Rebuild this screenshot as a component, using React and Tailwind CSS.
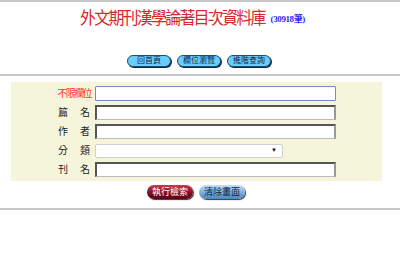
import React from "react";

const cjk = "font-['Liberation_Serif','Noto_Sans_CJK_TC',serif]";

function NavButton({ children }) {
  return (
    <span className="flex h-[12px] w-[44px] items-center justify-center rounded-full border border-[#1d4d78] bg-[#6ccdf7] text-[8px] leading-none text-[#0b2850] shadow-[1px_1px_0_#0b2a48]">
      {children}
    </span>
  );
}

function Label({ text, red }) {
  if (red) {
    return (
      <span className="w-[34px] text-right text-[10px] leading-none tracking-[-1.6px] text-[#ff3030]">
        {text}
      </span>
    );
  }
  return (
    <span className="flex w-[34px] justify-between px-[1px] text-[10px] leading-none text-[#222]">
      <span>{text[0]}</span>
      <span>{text[1]}</span>
    </span>
  );
}

function Row({ label, red, children }) {
  return (
    <div className="flex h-[15px] items-center gap-[4px] pl-[46px]">
      <Label text={label} red={red} />
      {children}
    </div>
  );
}

function TextBox({ focus }) {
  return (
    <div
      className={
        focus
          ? "h-[15px] w-[241px] rounded-[1px] border border-[#6b8fc9] bg-white"
          : "h-[15px] w-[241px] border-t-2 border-l-2 border-b border-r-2 border-t-[#555] border-l-[#555] border-b-[#bbb] border-r-[#999] bg-white"
      }
    />
  );
}

export default function App() {
  return (
    <div className={`w-[400px] h-[265px] bg-white ${cjk}`}>
      <div className="h-[2px] bg-[#c8c8c8]" />
      <div className="h-[72px]">
        <div className="flex items-baseline pl-[80px] pt-[5px]">
          <span className="inline-block origin-top scale-y-[1.1] text-[16px] leading-[19px] tracking-[-1.8px] text-[#d8262c]">
            外文期刊漢學論著目次資料庫
          </span>
          <span className="ml-[6px] text-[9px] font-bold tracking-[-0.4px] text-[#2b2bee]">
            (30918筆)
          </span>
        </div>
        <div className="mt-[28px] flex gap-[6px] pl-[127px]">
          <NavButton>回首頁</NavButton>
          <NavButton>欄位瀏覽</NavButton>
          <NavButton>進階查詢</NavButton>
        </div>
      </div>
      <div className="h-[2px] bg-[#c8c8c8]" />
      <div className="ml-[11px] mt-[6px] flex h-[99px] w-[371px] flex-col gap-[4px] bg-[#f5f5dc] pt-[4px]">
        <Row label="不限欄位" red>
          <TextBox focus />
        </Row>
        <Row label="篇名">
          <TextBox />
        </Row>
        <Row label="作者">
          <TextBox />
        </Row>
        <Row label="分類">
          <div className="flex h-[14px] w-[188px] items-center justify-end rounded-[2px] border border-[#cfcfcf] bg-white pr-[5px] text-[6px] text-[#111]">
            ▼
          </div>
        </Row>
        <Row label="刊名">
          <TextBox />
        </Row>
      </div>
      <div className="mt-[4px] flex h-[14px] gap-[6px] pl-[147px]">
        <span className="flex w-[46px] items-center justify-center rounded-full bg-gradient-to-b from-[#c73a52] via-[#8e0f24] to-[#5a0010] text-[9px] leading-none text-white shadow-[1px_1px_1px_#333]">
          執行檢索
        </span>
        <span className="flex w-[46px] items-center justify-center rounded-full bg-gradient-to-b from-[#c4def3] via-[#7fb3e0] to-[#4a86c0] text-[9px] leading-none text-[#0b1f3a] shadow-[1px_1px_1px_#333]">
          清除畫面
        </span>
      </div>
      <div className="mt-[9px] h-[2px] bg-[#c8c8c8]" />
    </div>
  );
}
